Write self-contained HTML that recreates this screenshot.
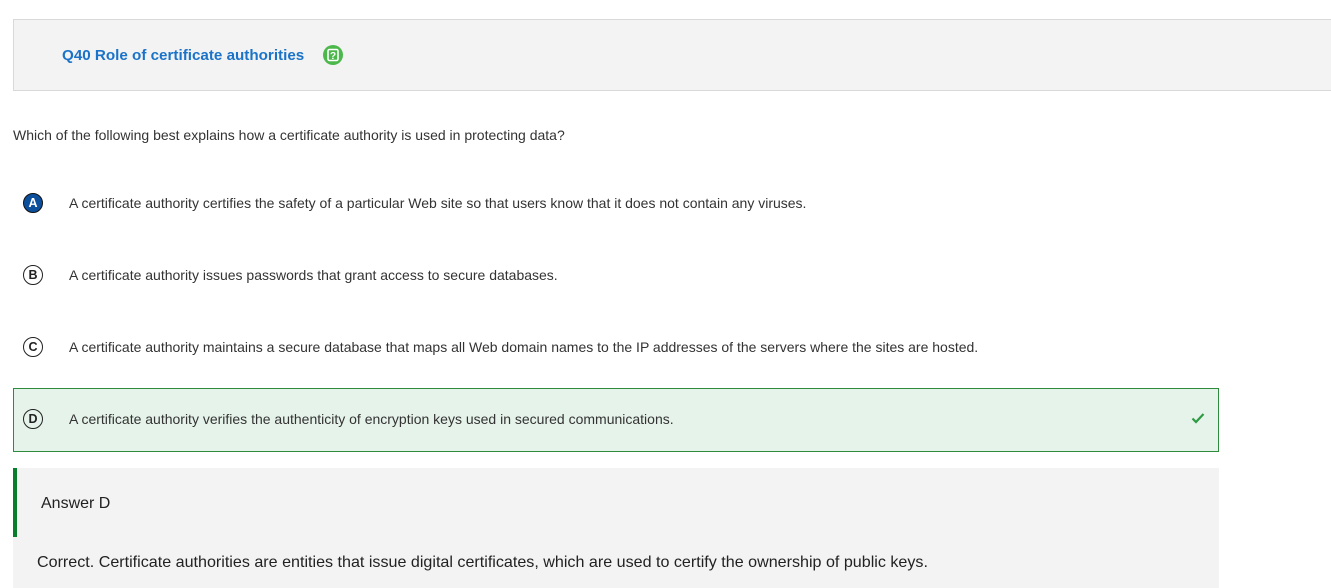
<!DOCTYPE html>
<html><head><style>
body{margin:0;width:1331px;height:588px;overflow:hidden;background:#fff;font-family:"Liberation Sans",Arial,sans-serif;position:relative}
.hdr{position:absolute;left:13px;top:19px;width:1330px;height:72px;background:#f3f3f3;border:1px solid #d9d9d9;box-sizing:border-box}
.title{position:absolute;left:62px;top:47px;font-size:15.2px;color:#1a73c8;font-weight:bold}
.q{position:absolute;left:13px;top:127px;font-size:14px;color:#333}
.opt{position:absolute;left:69px;font-size:14px;color:#333}
.c{position:absolute;left:23px;width:18px;height:18px;border:1.5px solid #222;border-radius:50%;font-size:12.5px;font-weight:bold;text-align:center;line-height:18px;color:#222}
.dbox{position:absolute;left:13px;top:388px;width:1206px;height:64px;background:#e6f3ea;border:1px solid #2e8b3e;box-sizing:border-box}
.ans{position:absolute;left:13px;top:468px;width:1206px;height:120px;background:#f3f3f3}
.bar{position:absolute;left:13px;top:468px;width:4px;height:69px;background:#0a7d2c}
</style></head><body>
<div class="hdr"></div>
<div class="title">Q40 Role of certificate authorities</div>
<svg style="position:absolute;left:323px;top:45px" width="20" height="20"><circle cx="10" cy="10" r="10" fill="#4cb84c"/><rect x="5" y="4.5" width="10" height="11" rx="1.5" fill="none" stroke="#fff" stroke-width="1.6"/><text x="10" y="14" font-size="10" font-weight="bold" fill="#fff" text-anchor="middle" font-family="Liberation Sans">?</text></svg>
<div class="q">Which of the following best explains how a certificate authority is used in protecting data?</div>
<div class="c" style="top:193px;background:#0b4f9c;color:#fff;border-color:#111">A</div>
<div class="opt" style="top:195px">A certificate authority certifies the safety of a particular Web site so that users know that it does not contain any viruses.</div>
<div class="c" style="top:265px">B</div>
<div class="opt" style="top:267px">A certificate authority issues passwords that grant access to secure databases.</div>
<div class="c" style="top:337px">C</div>
<div class="opt" style="top:339px">A certificate authority maintains a secure database that maps all Web domain names to the IP addresses of the servers where the sites are hosted.</div>
<div class="dbox"></div>
<div class="c" style="top:409px">D</div>
<div class="opt" style="top:411px">A certificate authority verifies the authenticity of encryption keys used in secured communications.</div>
<svg style="position:absolute;left:1191px;top:412px" width="14" height="12"><path d="M1.5 6.5 L5 10 L12.5 2" fill="none" stroke="#2e9b44" stroke-width="2.2"/></svg>
<div class="ans"></div>
<div class="bar"></div>
<div style="position:absolute;left:41px;top:494px;font-size:16px;color:#222;line-height:18px;padding-top:1px">Answer D</div>
<div style="position:absolute;left:37px;top:553px;font-size:16.1px;color:#222">Correct. Certificate authorities are entities that issue digital certificates, which are used to certify the ownership of public keys.</div>
</body></html>
